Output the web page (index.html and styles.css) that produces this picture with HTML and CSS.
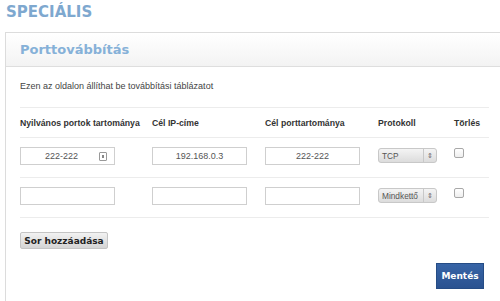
FILE: index.html
```html
<!DOCTYPE html>
<html lang="hu">
<head>
    <meta charset="UTF-8">
    <title>Speciális - Porttovábbítás</title>
    <link rel="stylesheet" href="styles.css">
</head>
<body>
    <h1 class="page-title">SPECIÁLIS</h1>
    <div class="panel">
        <div class="panel-head">
            <h2>Porttovábbítás</h2>
        </div>
        <div class="panel-body">
            <p class="intro">Ezen az oldalon állíthat be továbbítási táblázatot</p>
            <table class="fwd-table">
                <thead>
                    <tr>
                        <th class="col-pub">Nyilvános portok tartománya</th>
                        <th class="col-ip">Cél IP-címe</th>
                        <th class="col-port">Cél porttartománya</th>
                        <th class="col-proto">Protokoll</th>
                        <th class="col-del">Törlés</th>
                    </tr>
                </thead>
                <tbody>
                    <tr>
                        <td>
                            <div class="field has-icon">
                                <span class="field-text">222-222</span>
                                <span class="field-icon"></span>
                            </div>
                        </td>
                        <td><div class="field"><span class="field-text">192.168.0.3</span></div></td>
                        <td><div class="field"><span class="field-text">222-222</span></div></td>
                        <td>
                            <div class="select">
                                <span class="select-text">TCP</span>
                                <span class="select-arrows">&#8661;</span>
                            </div>
                        </td>
                        <td><span class="check"></span></td>
                    </tr>
                    <tr>
                        <td><div class="field"></div></td>
                        <td><div class="field"></div></td>
                        <td><div class="field"></div></td>
                        <td>
                            <div class="select">
                                <span class="select-text">Mindkettő</span>
                                <span class="select-arrows">&#8661;</span>
                            </div>
                        </td>
                        <td><span class="check"></span></td>
                    </tr>
                </tbody>
            </table>
            <button type="button" class="add-btn">Sor hozzáadása</button>
            <div class="save-row">
                <button type="button" class="save-btn">Mentés</button>
            </div>
        </div>
    </div>
</body>
</html>
```

FILE: styles.css
```css
html, body {
    margin: 0;
    padding: 0;
    background: #ffffff;
    overflow: hidden;
}
body {
    width: 500px;
    height: 301px;
    font-family: "Liberation Sans", Arial, sans-serif;
    color: #333;
}
.page-title {
    margin: 0;
    padding: 2px 0 0 6px;
    height: 30px;
    font-family: "DejaVu Sans", Verdana, sans-serif;
    font-size: 15px;
    font-weight: bold;
    line-height: 20px;
    color: #7ea8cf;
}
.panel {
    margin-left: 5px;
    width: 495px;
    height: 280px;
    border: 1px solid #dcdcdc;
    border-right: none;
    box-sizing: border-box;
}
.panel-head {
    height: 34px;
    border-bottom: 1px solid #dedede;
    background: linear-gradient(#ffffff, #f3f3f3);
    box-sizing: border-box;
}
.panel-head h2 {
    margin: 0;
    padding: 8px 0 0 14px;
    font-family: "DejaVu Sans", Verdana, sans-serif;
    font-size: 13px;
    font-weight: bold;
    line-height: 18px;
    color: #86b1d8;
}
.panel-body {
    padding: 0 0 0 14px;
    width: 469px;
}
.intro {
    margin: 0;
    padding: 13px 0 0 0;
    height: 27px;
    font-size: 9px;
    line-height: 12px;
    color: #444;
    border-bottom: 1px solid #ececec;
}
.fwd-table {
    border-collapse: collapse;
    width: 469px;
}
.fwd-table th {
    text-align: left;
    font-size: 8.7px;
    font-weight: bold;
    color: #333;
    height: 29px;
    padding: 0;
    border-bottom: 1px solid #ececec;
}
.fwd-table td {
    padding: 0;
    height: 39px;
    vertical-align: top;
    border-bottom: 1px solid #ececec;
}
.col-pub { width: 132px; }
.col-ip { width: 113px; }
.col-port { width: 113px; }
.col-proto { width: 76px; }
.col-del { width: 35px; }
.field {
    margin-top: 9px;
    width: 95px;
    height: 18px;
    border: 1px solid #cfcfcf;
    box-sizing: border-box;
    display: flex;
    align-items: center;
    justify-content: center;
    position: relative;
    background: #fff;
}
.field-text {
    font-size: 9px;
    color: #555;
}
.has-icon .field-text {
    margin-right: 12px;
}
.field-icon {
    position: absolute;
    right: 7px;
    top: 4px;
    width: 6px;
    height: 7px;
    border: 1px solid #999;
    border-radius: 1px;
}
.field-icon::after {
    content: "";
    position: absolute;
    left: 2px;
    top: 2px;
    width: 2px;
    height: 3px;
    background: #888;
}
.select {
    margin-top: 10px;
    width: 59px;
    height: 15px;
    border: 1px solid #c8c8c8;
    border-radius: 3px;
    background: linear-gradient(#f4f4f4, #dcdcdc);
    box-sizing: border-box;
    display: flex;
    align-items: center;
}
.select-text {
    flex: 1;
    padding-left: 3px;
    font-size: 8.3px;
    color: #555;
    white-space: nowrap;
    overflow: hidden;
}
.select-arrows {
    width: 12px;
    height: 100%;
    border-left: 1px solid #c8c8c8;
    font-size: 7px;
    line-height: 13px;
    text-align: center;
    color: #666;
}
.check {
    display: block;
    margin-top: 10px;
    width: 8px;
    height: 8px;
    border: 1px solid #a8a8a8;
    border-radius: 2px;
    background: linear-gradient(#fff, #eee);
}
.add-btn {
    display: block;
    margin-top: 14px;
    width: 88px;
    height: 17px;
    padding: 0;
    border: 1px solid #c4c4c4;
    border-radius: 2px;
    background: linear-gradient(#f2f2f2, #d4d4d4);
    font-family: "DejaVu Sans", Verdana, sans-serif;
    font-size: 9px;
    font-weight: bold;
    color: #222;
}
.save-row {
    display: flex;
    justify-content: flex-end;
    margin-top: 14px;
    padding-right: 5px;
}
.save-btn {
    width: 48px;
    height: 26px;
    padding: 0;
    border: 1px solid #254c85;
    background: linear-gradient(#3764a6, #2a5290);
    font-family: "DejaVu Sans", Verdana, sans-serif;
    font-size: 9px;
    font-weight: bold;
    color: #fff;
}
```
